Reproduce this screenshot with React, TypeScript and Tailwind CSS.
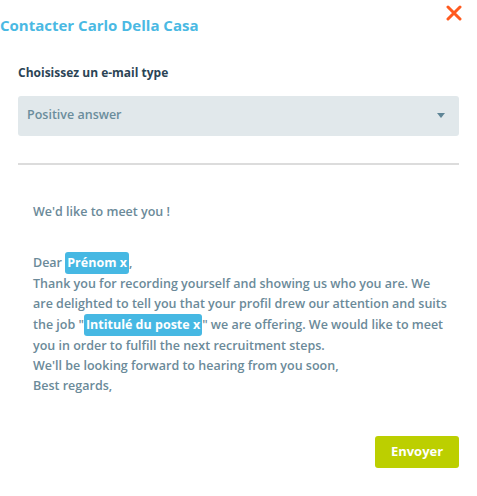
const Chip = ({ children }: { children: React.ReactNode }) => (
  <span className="inline-block rounded-[3px] bg-[#46b8e3] px-[2px] py-[1px] leading-[20px] font-bold text-white">
    {children}
  </span>
);

export default function App() {
  return (
    <div
      className="w-[477px] h-[496px] bg-white flex flex-col"
      style={{ fontFamily: "'Open Sans', Lato, sans-serif" }}
    >
      <div className="flex items-start justify-between">
        <h1 className="mt-[14px] text-[15px] font-bold text-[#4ab9e3]">
          Contacter Carlo Della Casa
        </h1>
        <button className="mt-[5px] mr-[15px] w-[16px] h-[16px]">
          <svg viewBox="0 0 16 16" width="16" height="16">
            <path
              d="M2 2 L14 14 M14 2 L2 14"
              stroke="#ff5a1f"
              strokeWidth="3"
              strokeLinecap="round"
            />
          </svg>
        </button>
      </div>

      <div className="px-[18px] flex flex-col flex-1">
        <label className="mt-[27px] text-[12px] font-bold text-[#2b4455]">
          Choisissez un e-mail type
        </label>
        <div className="mt-[14px] h-[40px] rounded-[3px] bg-[#e1e8eb] flex items-center justify-between pl-[9px] pr-[14px]">
          <span className="text-[12.5px] font-semibold text-[#6b8d9c]">Positive answer</span>
          <svg width="8" height="5" viewBox="0 0 8 5">
            <path d="M0 0 H8 L4 5 Z" fill="#5f8596" />
          </svg>
        </div>
        <div className="mt-[27px] h-[2px] bg-[#dcdcdc]" />

        <div className="pl-[15px] pt-[37px] text-[12.5px] leading-[20px] text-[#6b8a99] font-semibold whitespace-nowrap">
          <p>We'd like to meet you !</p>
          <p className="mt-[30px]">
            Dear <Chip>Prénom x</Chip>,
          </p>
          <p>
            Thank you for recording yourself and showing us who you are. We
            <br />
            are delighted to tell you that your profil drew our attention and suits
            <br />
            the job "<Chip>Intitulé du poste x</Chip>" we are offering. We would like to meet
            <br />
            you in order to fulfill the next recruitment steps.
            <br />
            We'll be looking forward to hearing from you soon,
            <br />
            Best regards,
          </p>
        </div>

        <div className="mt-auto mb-[28px] flex justify-end">
          <button className="w-[84px] h-[32px] rounded-[3px] bg-[#bccf00] text-white text-[13px] font-bold">
            Envoyer
          </button>
        </div>
      </div>
    </div>
  );
}
